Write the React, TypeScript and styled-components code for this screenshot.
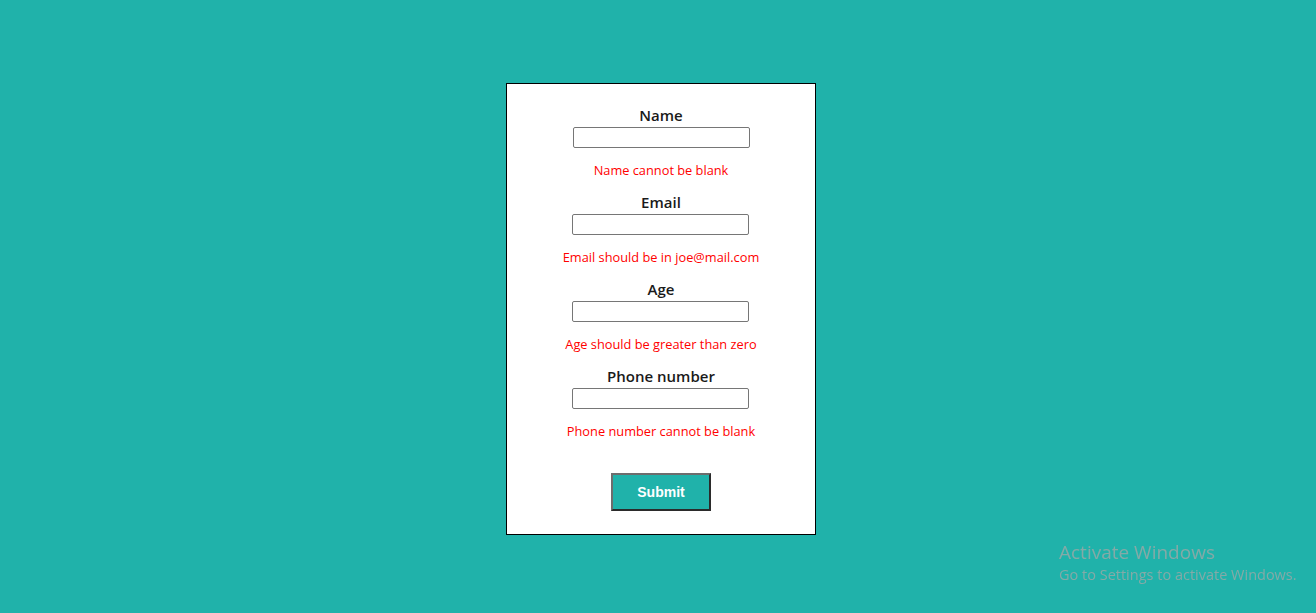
import React from "react";
import styled, { createGlobalStyle } from "styled-components";

const Global = createGlobalStyle`
  html, body { margin: 0; padding: 0; background: #20b2aa; }
  body { font-family: "Open Sans", "Noto Sans", sans-serif; height: 613px; overflow: hidden; }
`;

const Page = styled.div`
  display: flex;
  justify-content: center;
  padding-top: 83px;
  padding-left: 6px;
`;

const Card = styled.form`
  width: 308px;
  background: #fff;
  border: 1px solid #000;
  padding: 21px 0 23px;
  display: flex;
  flex-direction: column;
  align-items: center;
`;

const Group = styled.div`
  display: flex;
  flex-direction: column;
  align-items: center;
`;

const Label = styled.label`
  font-size: 15px;
  font-weight: 600;
  line-height: 20px;
  color: #1a1a1a;
  height: 20px;
  margin-bottom: 2px;
`;

const Input = styled.input`
  box-sizing: border-box;
  width: 177px;
  height: 21px;
  border: 1px solid #767676;
  border-radius: 2px;
  padding: 0 4px;
  margin: 0;
  background: #fff;
`;

const Error = styled.p`
  margin: 14px 0 13px;
  font-size: 12.8px;
  line-height: 17px;
  color: #ff0000;
`;

const Submit = styled.button`
  margin-top: 20px;
  box-sizing: border-box;
  width: 100px;
  height: 38px;
  background: #20b2aa;
  color: #fff;
  font-family: "Liberation Sans", Arial, sans-serif;
  font-weight: 700;
  font-size: 14px;
  border: 2px solid;
  border-color: #6d6d6d #2b2b2b #2b2b2b #6d6d6d;
  cursor: pointer;
`;

const Watermark = styled.div`
  position: fixed;
  left: 1059px;
  top: 539px;
  color: #84aaa7;
  font-family: "Open Sans", "Noto Sans", sans-serif;
`;

const WmTitle = styled.div`
  font-size: 19px;
  line-height: 26px;
`;

const WmSub = styled.div`
  font-size: 14.5px;
  line-height: 20px;
`;

const fields = [
  { label: "Name", error: "Name cannot be blank" },
  { label: "Email", error: "Email should be in joe@mail.com" },
  { label: "Age", error: "Age should be greater than zero" },
  { label: "Phone number", error: "Phone number cannot be blank" },
];

export default function App() {
  return (
    <>
      <Global />
      <Page>
        <Card onSubmit={(e) => e.preventDefault()}>
          {fields.map((f) => (
            <Group key={f.label}>
              <Label>{f.label}</Label>
              <Input type="text" />
              <Error>{f.error}</Error>
            </Group>
          ))}
          <Submit type="submit">Submit</Submit>
        </Card>
      </Page>
      <Watermark>
        <WmTitle>Activate Windows</WmTitle>
        <WmSub>Go to Settings to activate Windows.</WmSub>
      </Watermark>
    </>
  );
}
